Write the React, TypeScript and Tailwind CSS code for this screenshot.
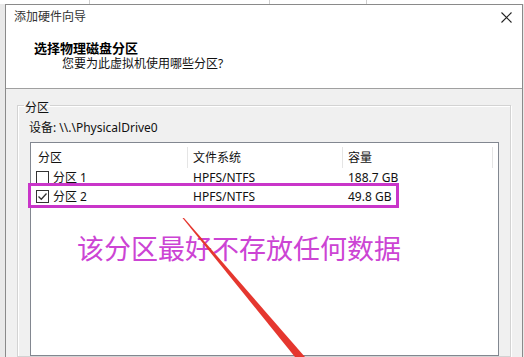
import React from "react";

const font = "font-['Noto_Sans','Noto_Sans_CJK_SC',sans-serif]";

function CheckBox({ checked }: { checked?: boolean }) {
  return (
    <span className="relative inline-block w-[13px] h-[13px] border border-[#333] bg-white shrink-0">
      {checked && (
        <svg className="absolute left-0 top-0" width="11" height="11" viewBox="0 0 11 11">
          <path d="M1.5 5.5 L4.3 8.3 L9.5 2.5" fill="none" stroke="#333" strokeWidth="1.3" />
        </svg>
      )}
    </span>
  );
}

function Row({ name, fs, size, checked }: { name: string; fs: string; size: string; checked?: boolean }) {
  return (
    <div className="flex h-[19px] items-center text-[12px] leading-[16px] text-[#111]">
      <div className="w-[157px] flex items-center pl-[5px] gap-[4px]">
        <CheckBox checked={checked} />
        <span>{name}</span>
      </div>
      <div className="w-[155px] pl-[5px]">{fs}</div>
      <div className="w-[150px] pl-[5px]">{size}</div>
    </div>
  );
}

export default function App() {
  return (
    <div className={`relative w-[524px] h-[357px] overflow-hidden bg-[#e9e9e9] ${font} flex flex-col`}>
      <div className="h-[4px] bg-white flex shrink-0">
        <div className="w-[90px] border-r border-[#cfcfcf]" />
        <div className="w-[180px] border-r border-[#cfcfcf]" />
        <div className="w-[97px] border-r border-[#cfcfcf]" />
      </div>
      <div className="flex flex-1 pl-[5px]">
        <div className="w-[518px] border-l border-t border-r border-[#8a8a8a] bg-[#f0f0f0] flex flex-col">
          {/* title bar */}
          <div className="h-[24px] bg-white flex items-center justify-between pl-[8px] pr-[10px]">
            <span className="text-[12px] leading-[16px] text-[#333]">添加硬件向导</span>
            <svg width="11" height="11" viewBox="0 0 11 11">
              <path d="M0.5 0.5 L10.5 10.5 M10.5 0.5 L0.5 10.5" stroke="#222" strokeWidth="1.1" />
            </svg>
          </div>
          {/* header */}
          <div className="h-[60px] bg-white border-b border-[#a0a0a0] pt-[11px]">
            <div className="pl-[28px] text-[13px] leading-[16px] font-bold text-[#000]">选择物理磁盘分区</div>
            <div className="pl-[56px] text-[12px] leading-[16px] text-[#111]">您要为此虚拟机使用哪些分区?</div>
          </div>
          {/* body */}
          <div className="flex-1 pt-[5px]">
            <fieldset className="mx-[11px] border border-[#d3d3d3] shadow-[inset_1px_1px_0_#ffffff,1px_1px_0_#ffffff] px-[11px] pb-0">
              <legend className="-ml-[5px] px-[1px] pt-[6px] text-[12px] leading-[16px] text-[#111]">分区</legend>
              <div className="mt-[4px] text-[12px] leading-[16px] text-[#111]">设备: \\.\PhysicalDrive0</div>
              <div className="mt-[6px] ml-[1px] h-[214px] border border-[#828790] bg-white">
                <div className="flex h-[25px] pt-[4px] text-[12px] leading-[16px] text-[#111]">
                  <div className="w-[157px] border-r border-[#e5e5e5] pl-[7px] flex items-center">分区</div>
                  <div className="w-[155px] border-r border-[#e5e5e5] pl-[5px] flex items-center">文件系统</div>
                  <div className="w-[150px] border-r border-[#e5e5e5] pl-[5px] flex items-center">容量</div>
                </div>
                <Row name="分区 1" fs="HPFS/NTFS" size="188.7 GB" />
                <Row name="分区 2" fs="HPFS/NTFS" size="49.8 GB" checked />
              </div>
            </fieldset>
          </div>
        </div>
      </div>

      {/* annotations */}
      <div className="absolute left-[28px] top-[183px] w-[371px] h-[25px] border-[3px] border-[#c935c9]" />
      <div className="absolute left-[77px] top-[231px] text-[27px] leading-[34px] text-[#cc44d4] font-['Noto_Sans_CJK_SC',sans-serif] whitespace-nowrap">
        该分区最好不存放任何数据
      </div>
      <svg className="absolute left-0 top-0" width="524" height="357" viewBox="0 0 524 357">
        <polygon points="182.5,218 184,218 305,357 295,357" fill="#e5372f" />
      </svg>
    </div>
  );
}
